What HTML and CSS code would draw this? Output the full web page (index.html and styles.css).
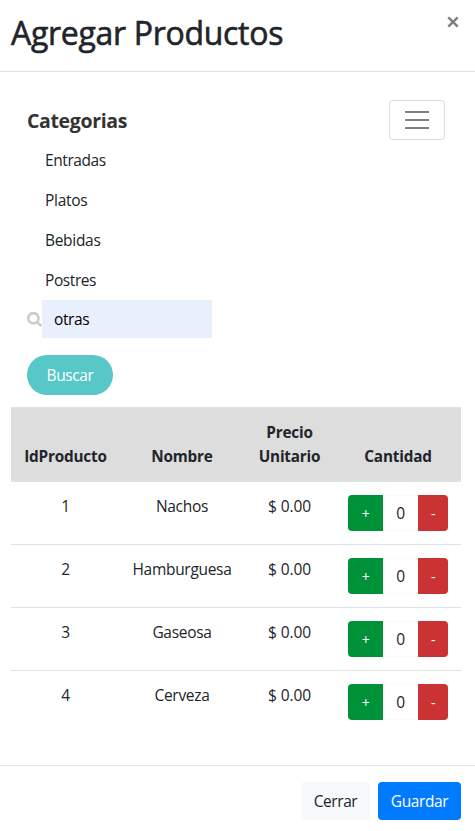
FILE: index.html
```html
<!DOCTYPE html>
<html lang="es">
<head>
<meta charset="utf-8">
<title>Agregar Productos</title>
<link rel="stylesheet" href="styles.css">
</head>
<body>
<div class="modal">
  <header class="modal-header">
    <h2 class="title">Agregar Productos</h2>
    <button class="close" aria-label="Cerrar"><svg width="12" height="12" viewBox="0 0 12 12"><path d="M1.3 1.3 10.7 10.7M10.7 1.3 1.3 10.7"/></svg></button>
  </header>
  <main class="modal-body">
    <nav class="menu">
      <div class="menu-top">
        <h5 class="menu-title">Categorias</h5>
        <button class="toggler" aria-label="Menu"><svg width="30" height="30" viewBox="0 0 30 30"><path d="M3 7h24M3 15h24M3 23h24"/></svg></button>
      </div>
      <ul class="categories">
        <li class="tight">Entradas</li>
        <li>Platos</li>
        <li>Bebidas</li>
        <li class="tight">Postres</li>
      </ul>
      <div class="search">
        <svg class="search-icon" width="15" height="15" viewBox="0 0 15 15"><circle cx="6.4" cy="6.2" r="5.1"/><path d="M10 9.8l4.2 4.2"/></svg>
        <input class="search-input" type="text" value="otras">
      </div>
      <button class="search-button">Buscar</button>
    </nav>
    <table class="products">
      <colgroup><col class="c-id"><col class="c-name"><col class="c-price"><col class="c-qty"></colgroup>
      <thead>
        <tr><th>IdProducto</th><th>Nombre</th><th>Precio<br>Unitario</th><th>Cantidad</th></tr>
      </thead>
      <tbody>
        <tr><td>1</td><td>Nachos</td><td class="price">$ 0.00</td><td><div class="qty"><button class="plus">+</button><span class="count">0</span><button class="minus">-</button></div></td></tr>
        <tr><td>2</td><td>Hamburguesa</td><td class="price">$ 0.00</td><td><div class="qty"><button class="plus">+</button><span class="count">0</span><button class="minus">-</button></div></td></tr>
        <tr><td>3</td><td>Gaseosa</td><td class="price">$ 0.00</td><td><div class="qty"><button class="plus">+</button><span class="count">0</span><button class="minus">-</button></div></td></tr>
        <tr><td>4</td><td>Cerveza</td><td class="price">$ 0.00</td><td><div class="qty"><button class="plus">+</button><span class="count">0</span><button class="minus">-</button></div></td></tr>
      </tbody>
    </table>
  </main>
  <footer class="modal-footer">
    <button class="btn btn-light">Cerrar</button>
    <button class="btn btn-primary">Guardar</button>
  </footer>
</div>
</body>
</html>
```
FILE: styles.css
```css
* { box-sizing: border-box; }

body {
  margin: 0;
  background: #fff;
  color: #212529;
  font: 400 15.5px/24px "Open Sans", "Noto Sans", sans-serif;
  letter-spacing: -0.3px;
  overflow: hidden;
}

button {
  margin: 0;
  padding: 0;
  border: 0;
  background: none;
  font: inherit;
  letter-spacing: inherit;
  color: inherit;
}

svg { display: block; fill: none; }

.modal { height: 831px; }

.modal-header {
  display: flex;
  justify-content: space-between;
  align-items: flex-start;
  height: 72px;
  padding: 14px 16px 0 11px;
  border-bottom: 1px solid #dee2e6;
}

.title {
  margin: 0;
  font-size: 32px;
  line-height: 38px;
  font-weight: 500;
  letter-spacing: -0.3px;
  -webkit-text-stroke: 0.6px #212529;
}

.close { margin-top: 2px; }
.close svg { stroke: #808080; stroke-width: 2.5; }

.modal-body {
  height: 693px;
  padding: 28px 14px 0 11px;
}

.menu { padding: 0 16px; }

.menu-top {
  display: flex;
  justify-content: space-between;
  height: 40px;
}

.menu-title {
  margin: 0;
  color: #333;
  font-size: 19.5px;
  line-height: 42px;
  font-weight: 700;
  letter-spacing: -0.35px;
}

.toggler {
  width: 56px;
  height: 40px;
  padding: 4px 12px;
  border: 1px solid #dcdcdc;
  border-radius: 4px;
}
.toggler svg { stroke: #808080; stroke-width: 2; }

.categories {
  margin: 0;
  padding: 0 0 0 18px;
  list-style: none;
}
.categories li { height: 40px; line-height: 41px; }
.categories .tight { letter-spacing: -0.42px; }

.search { display: flex; align-items: center; height: 38px; }

.search-icon { stroke: #ccc; stroke-width: 2.6; }

.search-input {
  width: 170px;
  height: 38px;
  padding: 0 12px;
  border: 0;
  border-radius: 0;
  background: #e8f0fe;
  color: #000;
  font: inherit;
  letter-spacing: -0.4px;
}

.search-button {
  display: block;
  width: 86px;
  height: 40px;
  margin-top: 17px;
  border-radius: 20px;
  background: #57c7c7;
  color: #fff;
  letter-spacing: -0.4px;
}

.products {
  width: 450px;
  margin-top: 12px;
  border-collapse: separate;
  border-spacing: 0;
  table-layout: fixed;
  text-align: center;
}
.c-id { width: 109px; }
.c-name { width: 124px; }
.c-price { width: 91px; }
.c-qty { width: 126px; }

.products th {
  height: 75px;
  padding: 12px 0;
  border-top: 1px solid #dee2e6;
  border-bottom: 2px solid #dee2e6;
  background: #ddd;
  font-size: 15.3px;
  letter-spacing: -0.2px;
  vertical-align: bottom;
}

.products td {
  height: 63px;
  padding: 12px 0 0;
  border-top: 1px solid #dee2e6;
  vertical-align: top;
}
.products tbody tr:first-child td {
  height: 62px;
  border-top: 0;
}
.products .price { letter-spacing: -0.05px; }

.qty {
  display: flex;
  width: 100px;
  height: 36px;
  margin: 1px auto 0;
  border-radius: 4px;
  overflow: hidden;
  line-height: 36px;
}
.plus, .minus { padding-top: 1px; font-size: 14px; }
.plus { width: 35px; background: #009239; color: #fff; }
.minus { width: 30px; background: #cb3234; color: #fff; }
.count {
  width: 35px;
  border: 1px solid #f8f9fa;
  border-width: 1px 0;
  line-height: 35px;
}

.modal-footer {
  display: flex;
  justify-content: flex-end;
  gap: 8px;
  padding: 16px 14px 0;
  border-top: 1px solid #dee2e6;
}

.btn { height: 38px; border-radius: 4px; }
.btn-light { width: 69px; background: #f8f9fa; letter-spacing: -0.45px; }
.btn-primary { width: 83px; background: #007bff; color: #fff; letter-spacing: -0.4px; }
```
